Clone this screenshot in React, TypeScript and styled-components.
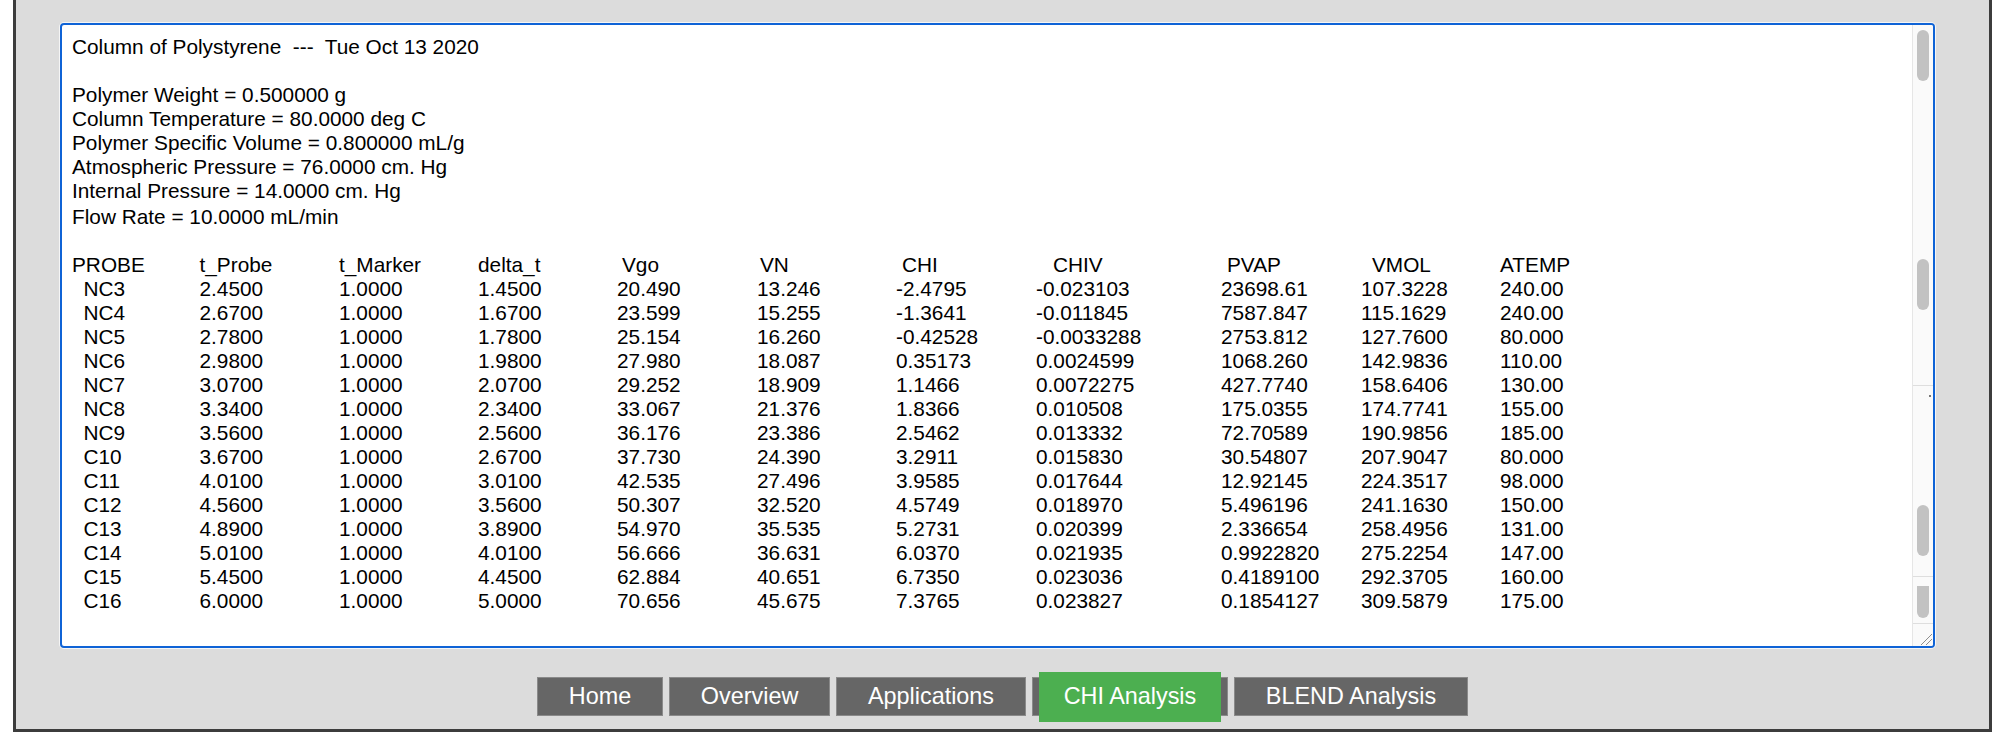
import React from "react";
import styled, { createGlobalStyle } from "styled-components";

const GlobalStyle = createGlobalStyle`
  html, body {
    margin: 0;
    padding: 0;
    background: #ffffff;
  }
  * {
    box-sizing: border-box;
  }
`;

const infoLines = [
    "Polymer Weight = 0.500000 g",
    "Column Temperature = 80.0000 deg C",
    "Polymer Specific Volume = 0.800000 mL/g",
    "Atmospheric Pressure = 76.0000 cm. Hg",
    "Internal Pressure = 14.0000 cm. Hg",
];

// header text + offset (px) from the value column start
const headers: { text: string; indent: number }[] = [
    { text: "PROBE", indent: 0 },
    { text: "t_Probe", indent: 0 },
    { text: "t_Marker", indent: 0 },
    { text: "delta_t", indent: 0 },
    { text: "Vgo", indent: 5 },
    { text: "VN", indent: 3 },
    { text: "CHI", indent: 6 },
    { text: "CHIV", indent: 17 },
    { text: "PVAP", indent: 6 },
    { text: "VMOL", indent: 11 },
    { text: "ATEMP", indent: 0 },
];

const rows: string[][] = [
    ["NC3", "2.4500", "1.0000", "1.4500", "20.490", "13.246", "-2.4795", "-0.023103", "23698.61", "107.3228", "240.00"],
    ["NC4", "2.6700", "1.0000", "1.6700", "23.599", "15.255", "-1.3641", "-0.011845", "7587.847", "115.1629", "240.00"],
    ["NC5", "2.7800", "1.0000", "1.7800", "25.154", "16.260", "-0.42528", "-0.0033288", "2753.812", "127.7600", "80.000"],
    ["NC6", "2.9800", "1.0000", "1.9800", "27.980", "18.087", "0.35173", "0.0024599", "1068.260", "142.9836", "110.00"],
    ["NC7", "3.0700", "1.0000", "2.0700", "29.252", "18.909", "1.1466", "0.0072275", "427.7740", "158.6406", "130.00"],
    ["NC8", "3.3400", "1.0000", "2.3400", "33.067", "21.376", "1.8366", "0.010508", "175.0355", "174.7741", "155.00"],
    ["NC9", "3.5600", "1.0000", "2.5600", "36.176", "23.386", "2.5462", "0.013332", "72.70589", "190.9856", "185.00"],
    ["C10", "3.6700", "1.0000", "2.6700", "37.730", "24.390", "3.2911", "0.015830", "30.54807", "207.9047", "80.000"],
    ["C11", "4.0100", "1.0000", "3.0100", "42.535", "27.496", "3.9585", "0.017644", "12.92145", "224.3517", "98.000"],
    ["C12", "4.5600", "1.0000", "3.5600", "50.307", "32.520", "4.5749", "0.018970", "5.496196", "241.1630", "150.00"],
    ["C13", "4.8900", "1.0000", "3.8900", "54.970", "35.535", "5.2731", "0.020399", "2.336654", "258.4956", "131.00"],
    ["C14", "5.0100", "1.0000", "4.0100", "56.666", "36.631", "6.0370", "0.021935", "0.9922820", "275.2254", "147.00"],
    ["C15", "5.4500", "1.0000", "4.4500", "62.884", "40.651", "6.7350", "0.023036", "0.4189100", "292.3705", "160.00"],
    ["C16", "6.0000", "1.0000", "5.0000", "70.656", "45.675", "7.3765", "0.023827", "0.1854127", "309.5879", "175.00"],
];

const navItems = ["Home", "Overview", "Applications", "CHI Analysis", "BLEND Analysis"];

const App = () => {
    return (
        <>
            <GlobalStyle />
            <Panel>
                <Report>
                    <Content>
                        <Line>Column of Polystyrene  ---  Tue Oct 13 2020</Line>
                        <Line />
                        {infoLines.map((text) => (
                            <Line key={text}>{text}</Line>
                        ))}
                        <Line shift={2}>Flow Rate = 10.0000 mL/min</Line>
                        <Line />
                        <TableRow>
                            {headers.map((h) => (
                                <Cell key={h.text} indent={h.indent}>{h.text}</Cell>
                            ))}
                        </TableRow>
                        {rows.map((row) => (
                            <TableRow key={row[0]}>
                                {row.map((value, index) => (
                                    <Cell key={index} indent={index === 0 ? 11.5 : 0}>{value}</Cell>
                                ))}
                            </TableRow>
                        ))}
                    </Content>
                    <Track>
                        <Thumb top={5} size={51} />
                        <Thumb top={178} size={51} />
                        <Separator top={75} />
                        <Dot top={9} />
                        <Thumb top={108} size={51} />
                        <Separator top={20} />
                        <Thumb top={9} size={32} flat />
                        <Separator top={5} />
                        <Grip>
                            <svg width="13" height="13" viewBox="0 0 13 13">
                                <line x1="1" y1="12" x2="12" y2="1" stroke="#8d8d8d" strokeWidth="1" />
                                <line x1="6" y1="12" x2="12" y2="6" stroke="#8d8d8d" strokeWidth="1" />
                            </svg>
                        </Grip>
                    </Track>
                </Report>
                <Nav>
                    {navItems.map((item) => (
                        <NavButton key={item} active={item === "CHI Analysis"}>
                            {item}
                        </NavButton>
                    ))}
                </Nav>
            </Panel>
        </>
    );
};

export default App;

const Panel = styled.div`
margin-left: 13px;
width: 1979px;
background: #dcdcdc;
border-left: 3px solid #3c3c3c;
border-right: 3px solid #3c3c3c;
border-bottom: 3px solid #3c3c3c;
padding: 23px 0 13px 0;
`;

const Report = styled.div`
margin-left: 44px;
width: 1875px;
height: 625px;
display: flex;
background: #ffffff;
border: 2px solid #0f63d6;
border-radius: 4px;
box-shadow: 0 0 0 1px rgba(255, 255, 255, 0.7);
overflow: hidden;
`;

const Content = styled.div`
flex: 1;
padding: 10px 0 0 10px;
font-family: "Liberation Sans", Arial, Helvetica, sans-serif;
font-size: 20.8px;
color: #000000;
white-space: pre;
overflow: hidden;
`;

const Line = styled.div<{ shift?: number }>`
height: 24px;
line-height: 24px;
margin-top: ${({ shift }) => (shift ? `${shift}px` : "0")};
`;

const TableRow = styled.div`
display: grid;
grid-template-columns: 127.5px 139.5px 139px 139px 140px 139px 140px 185px 140px 139px auto;
height: 24px;
line-height: 24px;
`;

const Cell = styled.span<{ indent: number }>`
padding-left: ${({ indent }) => indent}px;
`;

const Track = styled.div`
width: 21px;
flex-shrink: 0;
display: flex;
flex-direction: column;
background: #fafafa;
border-left: 1px solid #e6e6e6;
`;

const Thumb = styled.div<{ top: number; size: number; flat?: boolean }>`
margin: ${({ top }) => top}px 0 0 4px;
width: 12px;
height: ${({ size }) => size}px;
background: #c2c2c2;
border-radius: ${({ flat }) => (flat ? "0 0 6px 6px" : "6px")};
flex-shrink: 0;
`;

const Separator = styled.div<{ top: number }>`
margin-top: ${({ top }) => top}px;
height: 1px;
background: #dedede;
flex-shrink: 0;
`;

const Dot = styled.div<{ top: number }>`
margin-top: ${({ top }) => top}px;
align-self: flex-end;
margin-right: 2px;
width: 2px;
height: 2px;
background: #777777;
flex-shrink: 0;
`;

const Grip = styled.div`
margin-top: auto;
align-self: flex-end;
width: 13px;
height: 13px;
display: flex;
`;

const Nav = styled.div`
margin-top: 29px;
display: flex;
justify-content: center;
gap: 6px;
`;

const NavButton = styled.div<{ active: boolean }>`
position: relative;
z-index: 0;
height: 39px;
padding: 0 30.8px;
display: flex;
align-items: center;
background: #666666;
border: 1px solid #8a8a8a;
color: #ffffff;
font-family: "Liberation Sans", Arial, Helvetica, sans-serif;
font-size: 23.4px;
white-space: nowrap;
&::before {
    content: "";
    display: ${({ active }) => (active ? "block" : "none")};
    position: absolute;
    top: -6px;
    bottom: -7px;
    left: 6px;
    right: 6px;
    background: #4caf50;
    z-index: -1;
}
`;
